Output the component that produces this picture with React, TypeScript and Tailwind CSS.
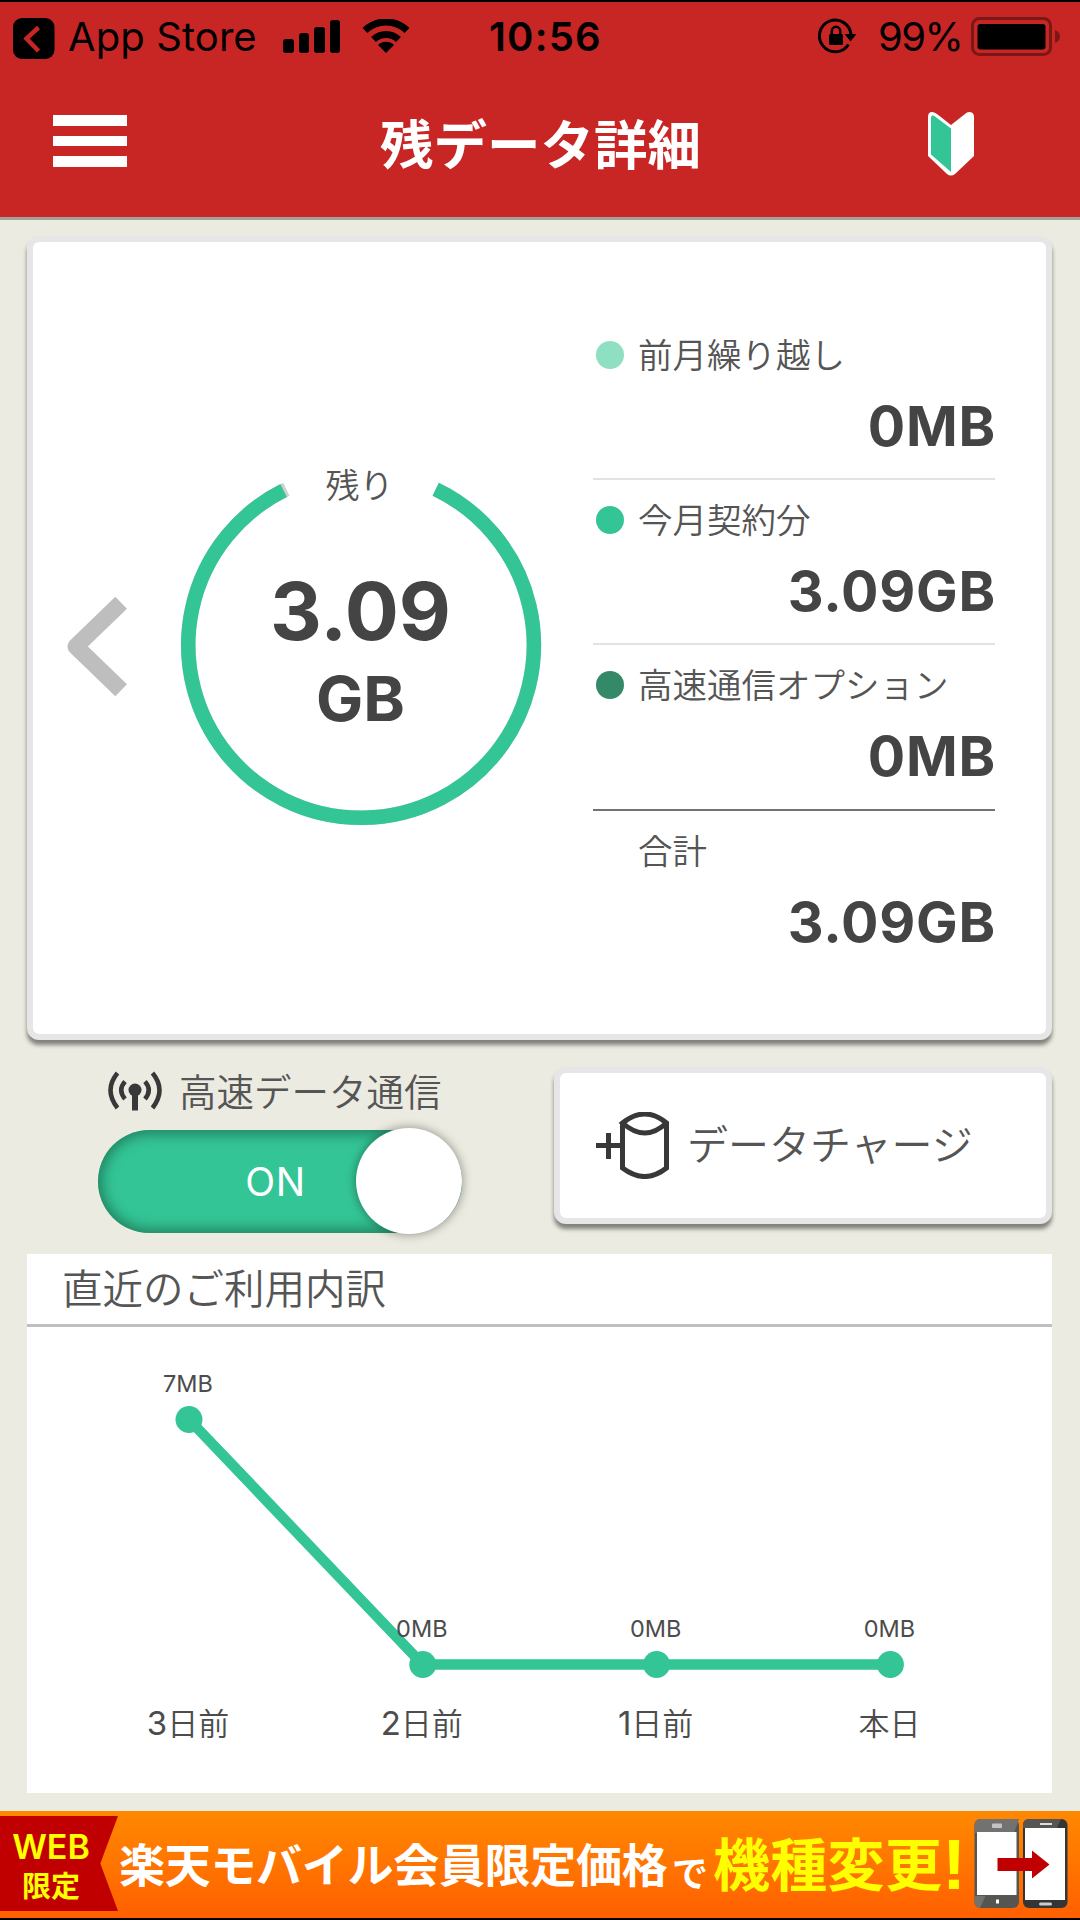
const planRows = [
  { label: '前月繰り越し', value: '0MB', dot: 'bg-[#8fdfc2]', line: 'border-[#e2e2e2]' },
  { label: '今月契約分', value: '3.09GB', dot: 'bg-[#34c596]', line: 'border-[#e2e2e2]' },
  { label: '高速通信オプション', value: '0MB', dot: 'bg-[#348a68]', line: 'border-[#737373]' },
  { label: '合計', value: '3.09GB', dot: 'bg-transparent', line: 'border-transparent' },
];

const usage = [
  { day: '3', unit: '日前', mb: 7 },
  { day: '2', unit: '日前', mb: 0 },
  { day: '1', unit: '日前', mb: 0 },
  { day: '', unit: '本日', mb: 0 },
];

const signalBars = ['h-[14px]', 'h-[20px]', 'h-[26px]', 'h-[33px]'];

function StatusBar() {
  return (
    <div className="flex h-[74px] pt-[15px] pl-[13px] text-black font-['Inter',sans-serif] text-[40px] leading-[40px]">
      <svg className="mt-px" width="42" height="41" viewBox="0 0 42 41">
        <rect width="41.5" height="41" rx="9" />
        <path d="M25.5 9.5 13.5 20.5 25.5 33" fill="none" stroke="#c82625" strokeWidth="4.5" />
      </svg>
      <span className="ml-[13px] w-[201px] tracking-[0.1px] whitespace-nowrap">App Store</span>
      <div className="ml-[14px] flex h-[36px] items-end gap-[5px]">
        {signalBars.map((h) => (
          <span key={h} className={`w-[10.5px] rounded-[3px] bg-black ${h}`} />
        ))}
      </div>
      <svg className="mt-[2px] ml-[22px]" width="48" height="35" viewBox="0 0 48 35">
        <path d="M3 11.5a30 30 0 0 1 42 0M11.500 20.500a18 18 0 0 1 25 0" fill="none" stroke="black" strokeWidth="7" />
        <path d="M24 34 16 26a11.500 11.500 0 0 1 16 0z" />
      </svg>
      <span className="ml-[79px] w-[130px] font-semibold tracking-[1.2px]">10:56</span>
      <svg className="mt-px ml-[199px]" width="40" height="38" viewBox="0 0 40 38">
        <path d="M30.500 26.500A15.800 15.800 0 1 1 33 17" fill="none" stroke="black" strokeWidth="3" />
        <path d="M26.500 16h12l-6 7.500z" />
        <rect x="11" y="16" width="14" height="11" rx="1.500" />
        <path d="M13.800 17v-4a4.200 4.200 0 0 1 8.400 0v4" fill="none" stroke="black" strokeWidth="2.500" />
      </svg>
      <span className="ml-[20px] w-[90px] tracking-[-1.6px]">99%</span>
      <svg className="ml-[3px]" width="91" height="39" viewBox="0 0 91 39">
        <rect x="1.500" y="1.500" width="78" height="36" rx="7" fill="none" stroke="#7a1817" strokeWidth="3" />
        <rect x="6.500" y="7" width="68" height="25.500" rx="3" />
        <path d="M84 13q5 2 5 6.500t-5 6.500z" fill="#7a1817" />
      </svg>
    </div>
  );
}

function Header() {
  return (
    <header className="h-[220px] border-t-2 border-b-[3px] border-t-black border-b-[#a3a29a] bg-[#c82625]">
      <StatusBar />
      <div className="flex items-start justify-between pt-[35px] pr-[105px] pl-[53px]">
        <div className="mt-[4px] flex w-[74px] flex-col gap-[10px]">
          <span className="h-[10.500px] bg-white" />
          <span className="h-[10.500px] bg-white" />
          <span className="h-[10.500px] bg-white" />
        </div>
        <h1 className="mt-[1px] ml-[27px] text-[53.500px] leading-[60px] font-bold text-white">残データ詳細</h1>
        <svg width="48" height="65" viewBox="0 0 48 65">
          <path d="M5 1Q1 1 1 6v39l19 18q4 3 8 0l19-18V6q0-5-5-5-2 0-4 2L24 14 10 3Q7 1 5 1z" fill="white" />
          <path d="M4 7q0-4 4-1.500L24 17.500V61L4 43.500z" fill="#34c596" />
        </svg>
      </div>
    </header>
  );
}

// Ring with an opening at the top for the caption
function Gauge() {
  return (
    <svg className="shrink-0 overflow-visible" width="362" height="362" viewBox="0 0 362 362">
      <path d="M255.700 25.200A172.800 172.800 0 1 1 106.300 25.200" fill="none" stroke="#d0d0d0" strokeWidth="14.500" />
      <path d="M255.700 25.200A172.800 172.800 0 1 1 103.600 26.600" fill="none" stroke="#34c596" strokeWidth="14.500" />
      <text x="179.500" y="34" textAnchor="middle" fontSize="34" fontWeight="350" fill="#555">残り</text>
      <g fontFamily="Inter, sans-serif" fontWeight="700" fill="#444" textAnchor="middle">
        <text x="180.500" y="176" fontSize="80" textLength="181" lengthAdjust="spacingAndGlyphs">3.09</text>
        <text x="180.500" y="257" fontSize="62" textLength="89" lengthAdjust="spacingAndGlyphs">GB</text>
      </g>
    </svg>
  );
}

function PlanList() {
  return (
    <ul className="ml-[51px] w-[402px] pt-[73px]">
      {planRows.map((row) => (
        <li key={row.label} className={`h-[165.200px] border-b-[2.500px] ${row.line}`}>
          <div className="flex h-[79px] items-center pl-[3px]">
            <span className={`mt-px h-7 w-7 rounded-full ${row.dot}`} />
            <span className="mb-[3px] ml-[14px] text-[34.500px] leading-[40px] font-[350] text-[#555]">{row.label}</span>
          </div>
          <div className="-mr-px text-right font-['Inter',sans-serif] text-[55.500px] leading-[64px] font-bold tracking-[0.8px]">{row.value}</div>
        </li>
      ))}
    </ul>
  );
}

function SpeedSwitch() {
  return (
    <div className="w-[527px] pl-[71px]">
      <div className="flex h-[48px] items-center pl-[10px]">
        <svg width="54" height="40" viewBox="0 0 54 40" fill="none" stroke="#383838">
          <path d="M9.500 2Q-4.500 19 9.500 37M44.500 2Q58.500 19 44.500 37" strokeWidth="4.500" />
          <path d="M17 10.500Q9.500 19 17 28M37 10.500Q44.500 19 37 28" strokeWidth="4.500" />
          <circle cx="27" cy="19" r="6.500" fill="#383838" stroke="none" />
          <path d="M27 19v20.500" strokeWidth="6" />
        </svg>
        <span className="mb-[2px] ml-[17px] text-[37.500px] leading-[44px] font-[350] text-[#555]">高速データ通信</span>
      </div>
      <button className="mt-[13px] flex h-[106px] w-[364px] items-center rounded-full">
        <span className="flex h-[103px] w-[364px] items-center justify-end rounded-full bg-[#34c596] shadow-[inset_0_0_14px_4px_#20805f]">
          <span className="mt-[2px] mr-[50px] font-['Inter',sans-serif] text-[39px] tracking-[0.8px] text-white">ON</span>
          <span className="h-[106px] w-[106px] shrink-0 rounded-full bg-white shadow-[0_0_10px_1px_rgba(0,0,0,0.350)]" />
        </span>
      </button>
    </div>
  );
}

function ChargeButton() {
  return (
    <button className="flex h-[157px] w-[498px] items-center rounded-[12px] border-[6px] border-[#e6e6e6] bg-white pl-[36px] shadow-[0_5px_4px_0_rgba(0,0,0,0.450)]">
      <svg width="74" height="67" viewBox="0 0 74 67" fill="none" stroke="#383838" strokeWidth="5">
        <path d="M0 33.500h25M12.500 21v26" />
        <path d="M26.500 11v45q22.500 17 44 0V11Q49-7 26.500 11q22.500 20 44 0" />
      </svg>
      <span className="mb-[7px] ml-[17px] text-[41px] leading-[48px] font-[350] text-[#555]">データチャージ</span>
    </button>
  );
}

function UsageChart() {
  const points = usage.map((d, i) => ({ ...d, x: 162 + i * 233.8, y: 337.5 - d.mb * 35 }));
  return (
    <section className="mt-[20px] ml-[27px] h-[539px] w-[1025px] bg-white">
      <h2 className="h-[73px] border-b-[3px] border-[#c0c0c0] pt-[9px] pl-[35px] text-[40.500px] leading-[48px] font-[350] text-[#555]">
        直近のご利用内訳
      </h2>
      <svg width="1025" height="466" viewBox="0 0 1025 466">
        <polyline points={points.map((p) => `${p.x},${p.y}`).join(' ')} fill="none" stroke="#34c596" strokeWidth="10.500" />
        {points.map((p) => (
          <g key={p.x} textAnchor="middle" fill="#4c4c4c">
            <circle cx={p.x} cy={p.y} r="13.500" fill="#34c596" />
            <text x={p.x - 1} y={p.y - 28} fontSize="23.500" fontFamily="Inter, sans-serif">{p.mb}MB</text>
            <text x={p.x - 1} y="408" fontSize="31" fontWeight="350">
              <tspan fontFamily="Inter, sans-serif" fontSize="33" fontWeight="400">{p.day}</tspan>
              {p.unit}
            </text>
          </g>
        ))}
      </svg>
    </section>
  );
}

function Banner() {
  return (
    <footer className="mt-[18px] flex h-[109px] items-start border-b-2 border-black bg-gradient-to-b from-[#ff8800] to-[#ff5f00]">
      <div className="mt-[5px] flex h-[95px] w-[118px] flex-col items-center bg-[#c00000] pt-[11px] pr-[16px] font-bold text-[#ffff00] [clip-path:polygon(0_0,100%_0,85%_50%,100%_100%,0_100%)]">
        <span className="font-['Inter',sans-serif] text-[34px] leading-[40px] font-semibold">WEB</span>
        <span className="text-[29px] leading-[34px]">限定</span>
      </div>
      <div className="flex h-[107px] items-center pb-[5px] pl-px leading-none font-bold whitespace-nowrap text-white">
        <span className="w-[553px] text-[46px] tracking-[-0.3px]">楽天モバイル会員限定価格</span>
        <span className="mt-[17px] w-[41px] text-[36px]">で</span>
        <span className="mb-[2px] text-[57px] tracking-[0.300px] text-[#ffff00]">機種変更</span>
        <span className="mt-[4px] font-['Liberation_Sans',sans-serif] text-[71px] text-[#ffff00]">!</span>
      </div>
      <svg className="absolute right-[12px] mt-[7px]" width="94" height="92" viewBox="0 0 94 92">
        <rect x="0.500" y="1" width="44.500" height="89" rx="6" fill="#555652" />
        <path d="M6.500 1H45l-5 14H.5V7q0-6 6-6M.5 78h11L6 90Q.5 89 .5 84z" fill="#727270" />
        <rect x="3" y="14" width="39.500" height="63" fill="white" />
        <rect x="18" y="5.500" width="10" height="4.500" rx="1" fill="#c4c4c4" />
        <rect x="22" y="81.500" width="3" height="4" fill="white" />
        <rect x="49" y="1" width="44.500" height="89" rx="6" fill="#343536" />
        <path d="M55 1h32l-4 9H49V7q0-6 6-6" fill="#555652" />
        <rect x="51" y="10" width="40" height="72" fill="white" />
        <rect x="66" y="5" width="12" height="2" fill="#ddd" />
        <rect x="65" y="84.500" width="13" height="3" rx="1.500" fill="#ccc" />
        <path d="M23.500 40H58v-7.500L75.500 46.500 58 60.500V53H23.500z" fill="#c00000" />
      </svg>
    </footer>
  );
}

export default function App() {
  return (
    <div className="relative h-[1920px] w-[1080px] overflow-hidden bg-[#ebebe1] font-['Noto_Sans_CJK_JP',sans-serif] text-[#444]">
      <Header />
      <section className="mt-[16px] ml-[27px] flex h-[804px] w-[1025px] rounded-[12px] border-[6px] border-[#e6e6e6] bg-white shadow-[0_5px_4px_0_rgba(0,0,0,0.450)]">
        <div className="flex w-[509px] items-center">
          <svg className="mt-[15px] ml-[33px]" width="66" height="110" viewBox="0 0 66 110">
            <path d="M56 11 10 55.500 56 100" fill="none" stroke="#bebebe" strokeWidth="17" strokeLinejoin="round" />
          </svg>
          <div className="mt-[14px] ml-[49px]">
            <Gauge />
          </div>
        </div>
        <PlanList />
      </section>
      <div className="mt-[27px] ml-[27px] flex">
        <SpeedSwitch />
        <ChargeButton />
      </div>
      <UsageChart />
      <Banner />
    </div>
  );
}
